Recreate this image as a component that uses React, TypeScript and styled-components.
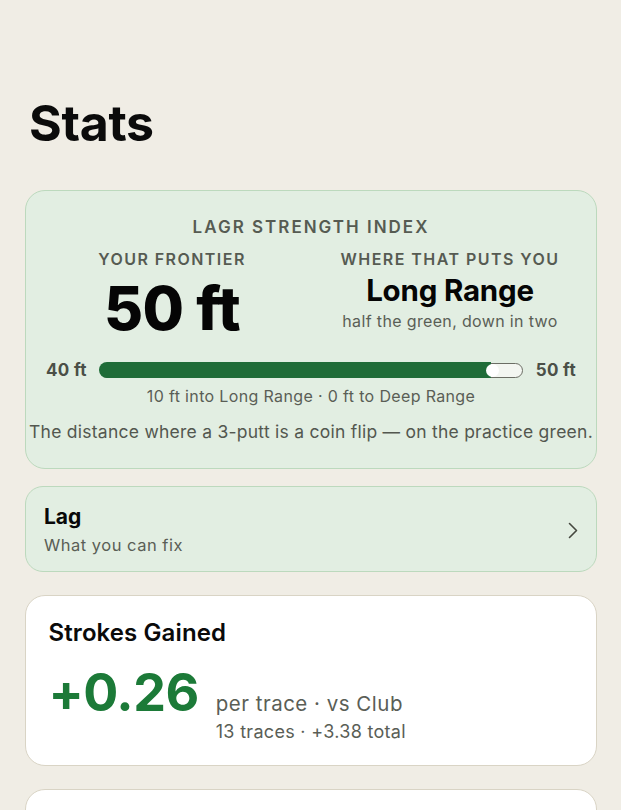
import styled, { createGlobalStyle } from "styled-components";

const GlobalStyle = createGlobalStyle`
  * { box-sizing: border-box; }
  html, body {
    margin: 0;
    padding: 0;
    background: #f0ede5;
    font-family: Inter, "Noto Sans", "DejaVu Sans", sans-serif;
    color: #111;
  }
`;

const FILL = 0.93;

function App() {
  return (
    <>
      <GlobalStyle />
      <StyledPage>
        <StyledTitle>Stats</StyledTitle>

        <StyledGroup>
          <StyledIndexCard>
            <StyledEyebrow $size={17} $spacing={2}>
              LAGR STRENGTH INDEX
            </StyledEyebrow>
            <StyledColumns>
              <StyledColumn>
                <StyledEyebrow $size={16} $spacing={1.45}>
                  YOUR FRONTIER
                </StyledEyebrow>
                <StyledFrontier>50 ft</StyledFrontier>
              </StyledColumn>
              <StyledColumn>
                <StyledEyebrow $size={16} $spacing={1.45}>
                  WHERE THAT PUTS YOU
                </StyledEyebrow>
                <StyledRange>Long Range</StyledRange>
                <StyledMuted $gap={4}>half the green, down in two</StyledMuted>
              </StyledColumn>
            </StyledColumns>

            <StyledBarRow>
              <StyledBarLabel>40 ft</StyledBarLabel>
              <StyledTrack>
                <StyledFill style={{ width: `${FILL * 100}%` }} />
                <StyledThumb style={{ left: `${FILL * 100}%` }} />
              </StyledTrack>
              <StyledBarLabel>50 ft</StyledBarLabel>
            </StyledBarRow>
            <StyledMuted>10 ft into Long Range · 0 ft to Deep Range</StyledMuted>
            <StyledFootnote>
              The distance where a 3-putt is a coin flip — on the practice green.
            </StyledFootnote>
          </StyledIndexCard>

          <StyledLinkCard>
            <div>
              <StyledLinkTitle>Lag</StyledLinkTitle>
              <StyledLinkSub>What you can fix</StyledLinkSub>
            </div>
            <svg width="10" height="17" viewBox="0 0 10 17" fill="none">
              <path
                d="M1.5 1.5 L8.5 8.5 L1.5 15.5"
                stroke="#45483f"
                strokeWidth="1.6"
                strokeLinecap="round"
                strokeLinejoin="round"
              />
            </svg>
          </StyledLinkCard>
        </StyledGroup>

        <StyledWhiteCard>
          <StyledCardTitle>Strokes Gained</StyledCardTitle>
          <StyledGainRow>
            <StyledGain>+0.26</StyledGain>
            <StyledGainMeta>
              <span>per trace · vs Club</span>
              <small>13 traces · +3.38 total</small>
            </StyledGainMeta>
          </StyledGainRow>
        </StyledWhiteCard>

        <StyledWhiteCard $empty />
      </StyledPage>
    </>
  );
}

export default App;

const StyledPage = styled.main`
  display: flex;
  flex-direction: column;
  gap: 23px;
  padding: 94px 24px 0 25px;
  height: 810px;
  overflow: hidden;
`;

const StyledTitle = styled.h1`
  margin: 0 0 15px 4px;
  font-size: 50px;
  line-height: 58px;
  font-weight: 700;
  letter-spacing: -0.3px;
  color: #0b0b0b;
`;

const StyledGroup = styled.section`
  display: flex;
  flex-direction: column;
  gap: 17px;
`;

const StyledIndexCard = styled.article`
  display: flex;
  flex-direction: column;
  align-items: center;
  padding: 26px 20px 25px;
  background: #e2eee2;
  border: 1.5px solid #bcd9bd;
  border-radius: 20px;
`;

const StyledEyebrow = styled.div<{ $size: number; $spacing: number }>`
  font-size: ${(p) => p.$size}px;
  line-height: 20px;
  font-weight: 600;
  letter-spacing: ${(p) => p.$spacing}px;
  color: #565b52;
`;

const StyledColumns = styled.div`
  display: grid;
  grid-template-columns: 1fr 1fr;
  column-gap: 26px;
  width: 100%;
  margin-top: 12px;
`;

const StyledColumn = styled.div`
  display: flex;
  flex-direction: column;
  align-items: center;
`;

const StyledFrontier = styled.div`
  margin-top: 10px;
  font-size: 60px;
  line-height: 58px;
  font-weight: 800;
  letter-spacing: -0.5px;
  color: #050505;
`;

const StyledRange = styled.div`
  margin-top: 4px;
  font-size: 29.5px;
  line-height: 34px;
  font-weight: 700;
  letter-spacing: -0.2px;
  color: #050505;
`;

const StyledMuted = styled.div<{ $gap?: number }>`
  margin-top: ${(p) => p.$gap ?? 0}px;
  font-size: 16px;
  line-height: 20px;
  letter-spacing: 0.35px;
  color: #5a5e56;
  white-space: nowrap;
`;

const StyledBarRow = styled.div`
  display: flex;
  align-items: center;
  gap: 13px;
  width: 100%;
  margin: 23px 0 6px;
`;

const StyledBarLabel = styled.span`
  font-size: 17px;
  line-height: 20px;
  font-weight: 700;
  letter-spacing: 0.3px;
  color: #4b4f47;
`;

const StyledTrack = styled.div`
  position: relative;
  flex: 1;
  height: 15px;
  border: 1.5px solid #6b6d64;
  border-radius: 8px;
  background: #f3f6f1;
`;

const StyledFill = styled.div`
  position: absolute;
  left: -1.5px;
  top: -1.5px;
  bottom: -1.5px;
  background: #1f6c38;
  border-radius: 8px 0 0 8px;
`;

const StyledThumb = styled.div`
  position: absolute;
  top: 50%;
  width: 13px;
  height: 13px;
  margin: -6.5px 0 0 -6.5px;
  border-radius: 50%;
  background: #ffffff;
`;

const StyledFootnote = styled.p`
  margin: 15px 0 0;
  font-size: 17.5px;
  line-height: 22px;
  letter-spacing: 0.25px;
  color: #53574f;
  white-space: nowrap;
`;

const StyledLinkCard = styled.button`
  display: flex;
  align-items: center;
  justify-content: space-between;
  padding: 18px 18px 16px;
  background: #e2eee2;
  border: 1.5px solid #bcd9bd;
  border-radius: 18px;
  font-family: inherit;
  text-align: left;
`;

const StyledLinkTitle = styled.div`
  font-size: 21px;
  line-height: 24px;
  font-weight: 700;
  color: #080808;
`;

const StyledLinkSub = styled.div`
  margin-top: 6px;
  font-size: 16.5px;
  line-height: 20px;
  letter-spacing: 0.5px;
  color: #5a5e56;
`;

const StyledWhiteCard = styled.article<{ $empty?: boolean }>`
  display: flex;
  flex-direction: column;
  flex-shrink: 0;
  padding: 21.5px 22px 21.5px 22.5px;
  background: #ffffff;
  border: 1.5px solid #d9d4c5;
  border-radius: 20px;
  min-height: ${(p) => (p.$empty ? "140px" : "auto")};
`;

const StyledCardTitle = styled.h2`
  margin: 0;
  font-size: 24px;
  line-height: 30px;
  font-weight: 600;
  letter-spacing: 0.1px;
  color: #0a0a0a;
`;

const StyledGainRow = styled.div`
  display: flex;
  align-items: baseline;
  gap: 17px;
  margin-top: 18.5px;
`;

const StyledGain = styled.div`
  font-size: 52px;
  line-height: 54px;
  font-weight: 700;
  letter-spacing: -0.5px;
  color: #1c7a38;
`;

const StyledGainMeta = styled.div`
  display: flex;
  flex-direction: column;
  color: #5a5e56;
  & > span {
    font-size: 20.5px;
    line-height: 26px;
    letter-spacing: 0.5px;
  }
  & > small {
    margin-top: 4px;
    font-size: 18px;
    line-height: 22px;
    letter-spacing: 0.3px;
  }
`;
